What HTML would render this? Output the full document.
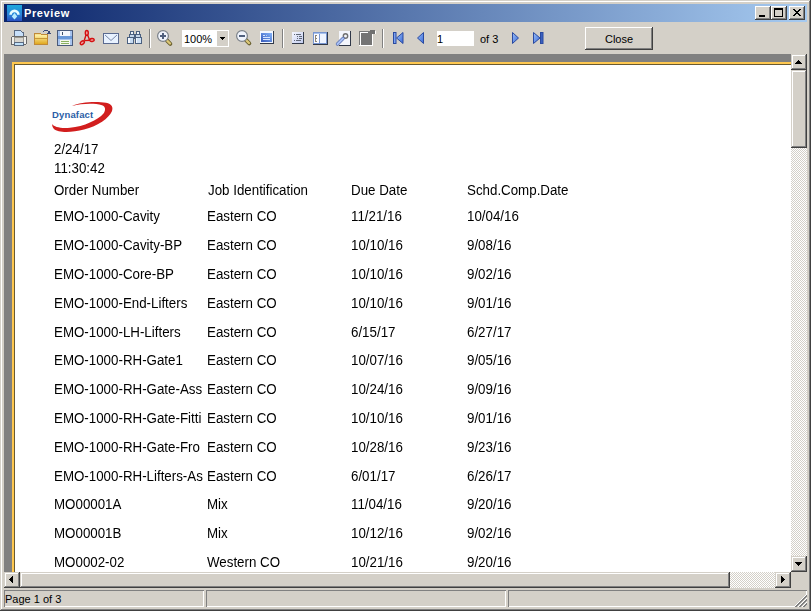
<!DOCTYPE html>
<html><head><meta charset="utf-8">
<style>
*{margin:0;padding:0;box-sizing:border-box}
html,body{width:811px;height:611px;overflow:hidden;background:#d4d0c8}
body{position:relative;font-family:"Liberation Sans",sans-serif;}
.a{position:absolute}
.ttl{font-weight:bold;color:#fff;font-size:11px;letter-spacing:0.6px}
.tb{font-size:11px;color:#000}
.pg{font-size:13.33px;color:#000;white-space:nowrap}
.r{position:absolute;white-space:nowrap;font-size:14px;line-height:16px;transform:scaleX(0.952);transform-origin:0 0}
</style></head><body>
<!-- window frame -->
<div class="a" style="left:1px;top:1px;width:808px;height:1px;background:#fff"></div>
<div class="a" style="left:1px;top:1px;width:1px;height:608px;background:#fff"></div>
<div class="a" style="left:809px;top:1px;width:1px;height:609px;background:#808080"></div>
<div class="a" style="left:1px;top:609px;width:809px;height:1px;background:#808080"></div>
<div class="a" style="left:810px;top:0;width:1px;height:611px;background:#404040"></div>
<div class="a" style="left:0;top:610px;width:811px;height:1px;background:#404040"></div>

<!-- title bar -->
<div class="a" style="left:4px;top:4px;width:803px;height:18px;background:linear-gradient(to right,#0a246a,#a6caf0)"></div>
<svg class="a" style="left:7px;top:5px" width="15" height="16">
<defs><linearGradient id="gic" x1="0" y1="0" x2="0" y2="1"><stop offset="0" stop-color="#1ea8dc"/><stop offset="0.6" stop-color="#2a84d8"/><stop offset="1" stop-color="#2a50c0"/></linearGradient>
<filter id="blr" x="-20%" y="-20%" width="140%" height="140%"><feGaussianBlur stdDeviation="0.6"/></filter></defs>
<rect width="15" height="16" fill="url(#gic)"/>
<g filter="url(#blr)">
<path d="M3.6 9.8 A3.9 3.9 0 0 1 11.4 9.8" stroke="#e8fcff" stroke-width="2.6" fill="none"/>
<path d="M7.5 8 L4.8 11.5 L7.5 14.5 L10.2 11.5 Z" fill="#b8ecff"/>
</g>
</svg>
<div class="a ttl" style="left:24px;top:6px;line-height:14px">Preview</div>
<div class="a" style="left:755px;top:6px;width:16px;height:14px;background:#d4d0c8;box-shadow:inset -1px -1px #404040,inset 1px 1px #fff,inset -2px -2px #808080"><div class="a" style="left:4px;top:9px;width:6px;height:2px;background:#000"></div></div>
<div class="a" style="left:771px;top:6px;width:16px;height:14px;background:#d4d0c8;box-shadow:inset -1px -1px #404040,inset 1px 1px #fff,inset -2px -2px #808080"><div class="a" style="left:3px;top:2px;width:9px;height:9px;border:1px solid #000;border-top-width:2px"></div></div>
<div class="a" style="left:789px;top:6px;width:16px;height:14px;background:#d4d0c8;box-shadow:inset -1px -1px #404040,inset 1px 1px #fff,inset -2px -2px #808080"><svg class="a" style="left:0;top:0" width="16" height="14" shape-rendering="crispEdges" fill="#000"><rect x="4" y="3" width="1" height="1"/><rect x="5" y="3" width="1" height="1"/><rect x="10" y="3" width="1" height="1"/><rect x="11" y="3" width="1" height="1"/><rect x="5" y="4" width="1" height="1"/><rect x="6" y="4" width="1" height="1"/><rect x="9" y="4" width="1" height="1"/><rect x="10" y="4" width="1" height="1"/><rect x="6" y="5" width="1" height="1"/><rect x="7" y="5" width="1" height="1"/><rect x="8" y="5" width="1" height="1"/><rect x="9" y="5" width="1" height="1"/><rect x="7" y="6" width="1" height="1"/><rect x="8" y="6" width="1" height="1"/><rect x="6" y="7" width="1" height="1"/><rect x="7" y="7" width="1" height="1"/><rect x="8" y="7" width="1" height="1"/><rect x="9" y="7" width="1" height="1"/><rect x="5" y="8" width="1" height="1"/><rect x="6" y="8" width="1" height="1"/><rect x="9" y="8" width="1" height="1"/><rect x="10" y="8" width="1" height="1"/><rect x="4" y="9" width="1" height="1"/><rect x="5" y="9" width="1" height="1"/><rect x="10" y="9" width="1" height="1"/><rect x="11" y="9" width="1" height="1"/></svg></div>

<!-- toolbar -->

<svg class="a" style="left:0;top:0" width="811" height="54" shape-rendering="crispEdges">
<defs>
<linearGradient id="gfold" x1="0" y1="0" x2="0" y2="1"><stop offset="0" stop-color="#fff2a8"/><stop offset="1" stop-color="#e0a820"/></linearGradient>
<linearGradient id="gblue" x1="0" y1="0" x2="1" y2="1"><stop offset="0" stop-color="#3d62c0"/><stop offset="1" stop-color="#7aa8f0"/></linearGradient>
<linearGradient id="gblue2" x1="0" y1="1" x2="1" y2="0"><stop offset="0" stop-color="#3558b8"/><stop offset="1" stop-color="#84b4fa"/></linearGradient>
<linearGradient id="gdoc" x1="0" y1="0" x2="1" y2="1"><stop offset="0" stop-color="#f4f6ff"/><stop offset="1" stop-color="#c4cef0"/></linearGradient>
<linearGradient id="gnav" x1="0" y1="0" x2="1" y2="1"><stop offset="0" stop-color="#9cc0f8"/><stop offset="1" stop-color="#3a6ad8"/></linearGradient>
</defs>
<!-- printer -->
<g>
<rect x="14" y="30" width="10" height="8" fill="#5a6a82"/>
<rect x="15" y="31" width="8" height="6" fill="#c8e0fa"/>
<rect x="21" y="30" width="3" height="2" fill="#d4d0c8"/><rect x="21" y="31" width="1" height="1" fill="#5a6a82"/><rect x="22" y="32" width="2" height="1" fill="#5a6a82"/>
<rect x="11" y="36" width="16" height="9" rx="2" fill="#6a6a6a"/>
<rect x="12" y="37" width="14" height="7" fill="#f0f0ee"/>
<rect x="14" y="37" width="10" height="6" fill="#9a9890"/>
<rect x="15" y="38" width="8" height="4" fill="#d8d6d0"/>
<rect x="14" y="42" width="10" height="4" fill="#5a6a82"/>
<rect x="15" y="43" width="8" height="2" fill="#bfe0f8"/>
</g>
<!-- folder -->
<g>
<rect x="34" y="33" width="14" height="12" fill="#c08a38"/>
<rect x="35" y="35" width="12" height="9" fill="url(#gfold)"/>
<rect x="35" y="34" width="6" height="1" fill="#f6e090"/>
<rect x="41" y="33" width="7" height="2" fill="#d4d0c8"/><rect x="41" y="34" width="7" height="1" fill="#c08a38"/>
<rect x="35" y="38" width="12" height="1" fill="#c89838"/>
<rect x="44" y="30" width="4" height="1" fill="#3a4a78"/><rect x="43" y="31" width="1" height="1" fill="#3a4a78"/>
<rect x="48" y="31" width="2" height="3" fill="#3a4a78"/><rect x="47" y="33" width="4" height="1" fill="#3a4a78"/>
</g>
<!-- save -->
<g>
<rect x="57" y="30" width="16" height="16" fill="#4a5a7a"/>
<rect x="58" y="31" width="14" height="14" fill="#a8c4ee"/>
<rect x="60" y="31" width="10" height="5" fill="#f4f6fc"/>
<rect x="62" y="32" width="1" height="3" fill="#40506a"/>
<rect x="58" y="36" width="14" height="3" fill="#6a98d8"/>
<rect x="60" y="40" width="10" height="5" fill="#f4f8ec"/>
<rect x="61" y="41" width="8" height="1" fill="#8ab060"/><rect x="61" y="43" width="8" height="1" fill="#8ab060"/>
</g>
<!-- pdf -->
<g fill="#f0a0a0" stroke="#d41010" stroke-width="1.4" shape-rendering="geometricPrecision">
<path d="M86 35 L84.2 40.6 M87.6 35 L89.6 40 M84.4 40.6 L90.2 40.2" fill="none"/>
<ellipse cx="86.8" cy="32.9" rx="1.5" ry="2.4"/>
<ellipse cx="82.3" cy="42.7" rx="2.3" ry="1.5" transform="rotate(-40 82.3 42.7)"/>
<ellipse cx="92" cy="40" rx="2.2" ry="1.5" transform="rotate(-10 92 40)"/>
</g>
<!-- email -->
<g>
<rect x="103" y="33" width="16" height="11" fill="#5a6a90"/>
<rect x="104" y="34" width="14" height="9" fill="#e8f2ff"/>
<path d="M105 35 L111 40.5 L117 35" stroke="#7a88a8" stroke-width="1" fill="none" shape-rendering="geometricPrecision"/>
</g>
<!-- binoculars -->
<g>
<rect x="130" y="31" width="4" height="4" fill="#4a6080"/><rect x="131" y="32" width="2" height="2" fill="#eef4fa"/>
<rect x="129" y="34" width="6" height="4" fill="#4a6080"/><rect x="130" y="35" width="4" height="2" fill="#c4d6ea"/>
<rect x="127" y="37" width="7" height="7" fill="#4a6080"/><rect x="128" y="38" width="5" height="5" fill="#c8dcf2"/><rect x="128" y="38" width="2" height="5" fill="#f4f8ff"/>
<rect x="136" y="31" width="4" height="4" fill="#4a6080"/><rect x="137" y="32" width="2" height="2" fill="#eef4fa"/>
<rect x="135" y="34" width="6" height="4" fill="#4a6080"/><rect x="136" y="35" width="4" height="2" fill="#c4d6ea"/>
<rect x="135" y="37" width="7" height="7" fill="#4a6080"/><rect x="136" y="38" width="5" height="5" fill="#d0e2f6"/><rect x="136" y="38" width="1" height="5" fill="#f4f8ff"/>
<rect x="134" y="37" width="1" height="2" fill="#4a6080"/>
</g>
<!-- separators -->
<rect x="149" y="29" width="1" height="19" fill="#808080"/><rect x="150" y="29" width="1" height="19" fill="#fff"/>
<rect x="282" y="29" width="1" height="19" fill="#808080"/><rect x="283" y="29" width="1" height="19" fill="#fff"/>
<rect x="382" y="29" width="1" height="19" fill="#808080"/><rect x="383" y="29" width="1" height="19" fill="#fff"/>
<!-- zoom in -->
<g shape-rendering="geometricPrecision">
<path d="M167 40.5 L170.3 43.8" stroke="#6a6030" stroke-width="4" stroke-linecap="round"/>
<path d="M167 40.5 L170 43.5" stroke="#dcc878" stroke-width="2.4" stroke-linecap="round"/>
<circle cx="163" cy="36" r="5.4" fill="#f0f4fc" stroke="#7a8088" stroke-width="1.2"/>
<rect x="160" y="35" width="6" height="2" fill="#50607e"/><rect x="162" y="33" width="2" height="6" fill="#50607e"/>
</g>
<!-- zoom out -->
<g shape-rendering="geometricPrecision">
<path d="M246 40 L249.3 43.3" stroke="#6a6030" stroke-width="4" stroke-linecap="round"/>
<path d="M246 40 L249 43" stroke="#dcc878" stroke-width="2.4" stroke-linecap="round"/>
<circle cx="242" cy="36" r="5.4" fill="#f0f4fc" stroke="#7a8088" stroke-width="1.2"/>
<rect x="239" y="35" width="6" height="2" fill="#50607e"/>
</g>
<!-- page width -->
<g>
<rect x="260" y="31" width="14" height="13" fill="#303848"/>
<rect x="260" y="31" width="13" height="12" fill="#f4f8ff"/>
<rect x="261" y="33" width="11" height="9" fill="url(#gblue2)"/>
<rect x="263" y="35" width="2" height="1" fill="#d8e6ff"/><rect x="266" y="35" width="1" height="1" fill="#b0c8f8"/>
<rect x="263" y="37" width="7" height="1" fill="#d8e6ff"/>
<rect x="263" y="39" width="7" height="1" fill="#d8e6ff"/>
</g>
<!-- outline icon -->
<g>
<rect x="292" y="32" width="12" height="12" fill="#303848"/>
<rect x="292" y="32" width="11" height="11" fill="url(#gdoc)"/>
<rect x="294" y="34" width="1" height="1" fill="#606878"/><rect x="296" y="34" width="5" height="1" fill="#606878"/>
<rect x="297" y="36" width="1" height="1" fill="#606878"/><rect x="299" y="36" width="3" height="1" fill="#606878"/>
<rect x="297" y="38" width="1" height="1" fill="#606878"/><rect x="299" y="38" width="3" height="1" fill="#606878"/>
<rect x="294" y="40" width="1" height="1" fill="#606878"/><rect x="296" y="40" width="5" height="1" fill="#606878"/>
</g>
<!-- two pane -->
<g>
<rect x="313" y="32" width="15" height="13" fill="#303848"/>
<rect x="313" y="32" width="14" height="12" fill="#7896d0"/>
<rect x="314" y="33" width="12" height="1" fill="#a8c2ee"/>
<rect x="314" y="34" width="5" height="9" fill="#fbfcff"/>
<rect x="320" y="34" width="6" height="9" fill="#eef4ff"/>
<rect x="315" y="35" width="1" height="7" fill="#8a8478"/><rect x="316" y="35" width="1" height="1" fill="#8a8478"/><rect x="316" y="38" width="1" height="1" fill="#8a8478"/><rect x="316" y="41" width="1" height="1" fill="#8a8478"/>
</g>
<!-- wrench -->
<g>
<rect x="339" y="31" width="12" height="15" fill="#303848"/>
<rect x="339" y="31" width="11" height="14" fill="#f4f6fc"/>
<circle cx="345.5" cy="36" r="2.2" fill="none" stroke="#707070" stroke-width="1.4" shape-rendering="geometricPrecision"/>
<path d="M343 38.5 L337.5 44" stroke="#5a70b0" stroke-width="3.4" stroke-linecap="round" shape-rendering="geometricPrecision"/>
<path d="M343 38.5 L337.5 44" stroke="#a8c0f4" stroke-width="2" stroke-linecap="round" shape-rendering="geometricPrecision"/>
</g>
<!-- gray page -->
<g>
<rect x="359" y="31" width="12" height="15" fill="#fff"/>
<rect x="359" y="31" width="11" height="14" fill="#7a7a7a"/>
<rect x="360" y="32" width="8" height="1" fill="#fff"/><rect x="360" y="32" width="1" height="13" fill="#fff"/>
<rect x="361" y="33" width="11" height="12" fill="#747474"/>
<rect x="372" y="34" width="1" height="12" fill="#fff"/><rect x="361" y="45" width="12" height="1" fill="#fff"/>
<rect x="370" y="30" width="5" height="4" fill="#707070"/><rect x="375" y="31" width="1" height="3" fill="#fff"/>
</g>
<!-- nav -->
<g shape-rendering="geometricPrecision">
<rect x="393.5" y="32.5" width="2.5" height="11" fill="#7aa0f0" stroke="#2a4aa0" stroke-width="1"/>
<path d="M403 32.5 L396.5 38 L403 43.5 Z" fill="url(#gnav)" stroke="#2a4aa0" stroke-width="1"/>
<path d="M423.5 32.5 L417.5 38 L423.5 43.5 Z" fill="url(#gnav)" stroke="#2a4aa0" stroke-width="1"/>
<path d="M512.5 32.5 L518.5 38 L512.5 43.5 Z" fill="url(#gnav)" stroke="#2a4aa0" stroke-width="1"/>
<path d="M533.5 32.5 L540 38 L533.5 43.5 Z" fill="url(#gnav)" stroke="#2a4aa0" stroke-width="1"/>
<rect x="540.5" y="32.5" width="2.5" height="11" fill="#3a60c0" stroke="#2a4aa0" stroke-width="1"/>
</g>
<!-- combo -->
<rect x="182" y="30" width="47" height="17" fill="#fff"/>
<rect x="217" y="31" width="11" height="15" fill="#d4d0c8"/>
<path d="M220 37h5v1h-1v1h-1v1h-1v-1h-1v-1h-1z" fill="#000"/>
<!-- page input -->
<rect x="437" y="31" width="37" height="15" fill="#fff"/>
</svg>
<div class="a tb" style="left:184px;top:33px;line-height:12px;font-size:11px">100%</div>
<div class="a tb" style="left:437px;top:33px;line-height:12px;font-size:11px">1</div>
<div class="a tb" style="left:480px;top:33px;line-height:12px;font-size:11px">of 3</div>
<div class="a" style="left:585px;top:27px;width:68px;height:23px;background:#d4d0c8;box-shadow:inset -1px -1px #404040,inset 1px 1px #fff,inset -2px -2px #808080"></div>
<div class="a tb" style="left:585px;top:33px;width:68px;text-align:center;line-height:12px;font-size:11px">Close</div>

<!-- client gray area -->
<div class="a" style="left:4px;top:54px;width:787px;height:518px;background:#808080;overflow:hidden">
  <div class="a" style="left:8px;top:8px;width:800px;height:600px;background:#ffc850"></div>
  <div class="a" style="left:10px;top:10px;width:800px;height:600px;background:#6a5a30"></div>
  <div class="a" style="left:11px;top:11px;width:800px;height:600px;background:#fff"></div>
</div>
<div id="page" class="a" style="left:0;top:0;width:791px;height:572px;overflow:hidden">
<svg class="a" style="left:48px;top:98px" width="70" height="38">
<path d="M24 8 C32 4 48 3 58 4.8 C64 6 65.5 9.5 63.8 13.5 C61 20 50 28 36 31.5 C24 34.8 10 35 6 31 C4.5 29.5 4 27.5 4.3 26 C6 29 12 30.5 22 29.8 C36 28.5 50 22 55.5 15.5 C58 12 57.5 8.5 54 7.3 C46 5 34 5.6 24 8 Z" fill="#d21e1e"/>
</svg>
<div class="a" style="left:52px;top:109px;font-size:9.5px;font-weight:bold;color:#2a5ea6;line-height:12px;letter-spacing:0.15px">Dynafact</div>
<div class="r" style="left:54px;top:141px">2/24/17</div>
<div class="r" style="left:54px;top:160px">11:30:42</div>
<div class="r" style="left:54px;top:182px">Order Number</div>
<div class="r" style="left:208px;top:182px">Job Identification</div>
<div class="r" style="left:351px;top:182px">Due Date</div>
<div class="r" style="left:467px;top:182px">Schd.Comp.Date</div>
<div class="r" style="left:54px;top:208px">EMO-1000-Cavity</div>
<div class="r" style="left:207px;top:208px">Eastern CO</div>
<div class="r" style="left:351px;top:208px">11/21/16</div>
<div class="r" style="left:467px;top:208px">10/04/16</div>
<div class="r" style="left:54px;top:237px">EMO-1000-Cavity-BP</div>
<div class="r" style="left:207px;top:237px">Eastern CO</div>
<div class="r" style="left:351px;top:237px">10/10/16</div>
<div class="r" style="left:467px;top:237px">9/08/16</div>
<div class="r" style="left:54px;top:266px">EMO-1000-Core-BP</div>
<div class="r" style="left:207px;top:266px">Eastern CO</div>
<div class="r" style="left:351px;top:266px">10/10/16</div>
<div class="r" style="left:467px;top:266px">9/02/16</div>
<div class="r" style="left:54px;top:295px">EMO-1000-End-Lifters</div>
<div class="r" style="left:207px;top:295px">Eastern CO</div>
<div class="r" style="left:351px;top:295px">10/10/16</div>
<div class="r" style="left:467px;top:295px">9/01/16</div>
<div class="r" style="left:54px;top:324px">EMO-1000-LH-Lifters</div>
<div class="r" style="left:207px;top:324px">Eastern CO</div>
<div class="r" style="left:351px;top:324px">6/15/17</div>
<div class="r" style="left:467px;top:324px">6/27/17</div>
<div class="r" style="left:54px;top:352px">EMO-1000-RH-Gate1</div>
<div class="r" style="left:207px;top:352px">Eastern CO</div>
<div class="r" style="left:351px;top:352px">10/07/16</div>
<div class="r" style="left:467px;top:352px">9/05/16</div>
<div class="r" style="left:54px;top:381px">EMO-1000-RH-Gate-Ass</div>
<div class="r" style="left:207px;top:381px">Eastern CO</div>
<div class="r" style="left:351px;top:381px">10/24/16</div>
<div class="r" style="left:467px;top:381px">9/09/16</div>
<div class="r" style="left:54px;top:410px">EMO-1000-RH-Gate-Fitti</div>
<div class="r" style="left:207px;top:410px">Eastern CO</div>
<div class="r" style="left:351px;top:410px">10/10/16</div>
<div class="r" style="left:467px;top:410px">9/01/16</div>
<div class="r" style="left:54px;top:439px">EMO-1000-RH-Gate-Fro</div>
<div class="r" style="left:207px;top:439px">Eastern CO</div>
<div class="r" style="left:351px;top:439px">10/28/16</div>
<div class="r" style="left:467px;top:439px">9/23/16</div>
<div class="r" style="left:54px;top:468px">EMO-1000-RH-Lifters-As</div>
<div class="r" style="left:207px;top:468px">Eastern CO</div>
<div class="r" style="left:351px;top:468px">6/01/17</div>
<div class="r" style="left:467px;top:468px">6/26/17</div>
<div class="r" style="left:54px;top:496px">MO00001A</div>
<div class="r" style="left:207px;top:496px">Mix</div>
<div class="r" style="left:351px;top:496px">11/04/16</div>
<div class="r" style="left:467px;top:496px">9/20/16</div>
<div class="r" style="left:54px;top:525px">MO00001B</div>
<div class="r" style="left:207px;top:525px">Mix</div>
<div class="r" style="left:351px;top:525px">10/12/16</div>
<div class="r" style="left:467px;top:525px">9/02/16</div>
<div class="r" style="left:54px;top:554px">MO0002-02</div>
<div class="r" style="left:207px;top:554px">Western CO</div>
<div class="r" style="left:351px;top:554px">10/21/16</div>
<div class="r" style="left:467px;top:554px">9/20/16</div>
</div>

<!-- scrollbars -->
<div class="a" style="left:791px;top:54px;width:16px;height:518px;background:repeating-conic-gradient(#d4d0c8 0 25%,#fff 0 50%) 0 0/2px 2px"></div>
<div class="a" style="left:791px;top:54px;width:16px;height:16px;background:#d4d0c8;box-shadow:inset -1px -1px #404040,inset 1px 1px #d4d0c8,inset -2px -2px #808080,inset 2px 2px #fff"><svg class="a" style="left:0;top:0" width="16" height="16"><path d="M7 6h1v1h1v1h1v1h1v1h-7v-1h1v-1h1v-1h1z" fill="#000"/></svg></div>
<div class="a" style="left:791px;top:70px;width:16px;height:78px;background:#d4d0c8;box-shadow:inset -1px -1px #404040,inset 1px 1px #d4d0c8,inset -2px -2px #808080,inset 2px 2px #fff"></div>
<div class="a" style="left:791px;top:556px;width:16px;height:16px;background:#d4d0c8;box-shadow:inset -1px -1px #404040,inset 1px 1px #d4d0c8,inset -2px -2px #808080,inset 2px 2px #fff"><svg class="a" style="left:0;top:0" width="16" height="16"><path d="M4 6h7v1h-1v1h-1v1h-1v1h-1v-1h-1v-1h-1v-1h-1z" fill="#000"/></svg></div>
<div class="a" style="left:4px;top:572px;width:787px;height:16px;background:repeating-conic-gradient(#fff 0 25%,#d4d0c8 0 50%) 0 0/2px 2px"></div>
<div class="a" style="left:4px;top:572px;width:16px;height:16px;background:#d4d0c8;box-shadow:inset -1px -1px #404040,inset 1px 1px #d4d0c8,inset -2px -2px #808080,inset 2px 2px #fff"><svg class="a" style="left:0;top:0" width="16" height="16"><path d="M8 4h1v7h-1v-1h-1v-1h-1v-1h-1v-1h1v-1h1v-1h1z" fill="#000"/></svg></div>
<div class="a" style="left:20px;top:572px;width:710px;height:16px;background:#d4d0c8;box-shadow:inset -1px -1px #404040,inset 1px 1px #d4d0c8,inset -2px -2px #808080,inset 2px 2px #fff"></div>
<div class="a" style="left:775px;top:572px;width:16px;height:16px;background:#d4d0c8;box-shadow:inset -1px -1px #404040,inset 1px 1px #d4d0c8,inset -2px -2px #808080,inset 2px 2px #fff"><svg class="a" style="left:0;top:0" width="16" height="16"><path d="M6 4h1v1h1v1h1v1h1v1h-1v1h-1v1h-1v1h-1z" fill="#000"/></svg></div>
<div class="a" style="left:791px;top:572px;width:16px;height:16px;background:#d4d0c8"></div>

<!-- status bar -->
<div class="a" style="left:4px;top:590px;width:200px;height:17px;box-shadow:inset 1px 1px #808080,inset -1px -1px #fff"></div>
<div class="a tb" style="left:5px;top:593px;line-height:13px">Page 1 of 3</div>
<div class="a" style="left:206px;top:590px;width:300px;height:17px;box-shadow:inset 1px 1px #808080,inset -1px -1px #fff"></div>
<div class="a" style="left:508px;top:590px;width:299px;height:17px;box-shadow:inset 1px 1px #808080,inset -1px -1px #fff"></div>
<svg class="a" style="left:791px;top:590px" width="16" height="17" shape-rendering="crispEdges"><rect x="15" y="4" width="1" height="1" fill="#fff"/><rect x="14" y="5" width="1" height="1" fill="#fff"/><rect x="15" y="5" width="1" height="1" fill="#808080"/><rect x="13" y="6" width="1" height="1" fill="#fff"/><rect x="14" y="6" width="1" height="1" fill="#808080"/><rect x="15" y="6" width="1" height="1" fill="#808080"/><rect x="12" y="7" width="1" height="1" fill="#fff"/><rect x="13" y="7" width="1" height="1" fill="#808080"/><rect x="14" y="7" width="1" height="1" fill="#808080"/><rect x="15" y="7" width="1" height="1" fill="#d4d0c8"/><rect x="11" y="8" width="1" height="1" fill="#fff"/><rect x="12" y="8" width="1" height="1" fill="#808080"/><rect x="13" y="8" width="1" height="1" fill="#808080"/><rect x="14" y="8" width="1" height="1" fill="#d4d0c8"/><rect x="15" y="8" width="1" height="1" fill="#fff"/><rect x="10" y="9" width="1" height="1" fill="#fff"/><rect x="11" y="9" width="1" height="1" fill="#808080"/><rect x="12" y="9" width="1" height="1" fill="#808080"/><rect x="13" y="9" width="1" height="1" fill="#d4d0c8"/><rect x="14" y="9" width="1" height="1" fill="#fff"/><rect x="15" y="9" width="1" height="1" fill="#808080"/><rect x="9" y="10" width="1" height="1" fill="#fff"/><rect x="10" y="10" width="1" height="1" fill="#808080"/><rect x="11" y="10" width="1" height="1" fill="#808080"/><rect x="12" y="10" width="1" height="1" fill="#d4d0c8"/><rect x="13" y="10" width="1" height="1" fill="#fff"/><rect x="14" y="10" width="1" height="1" fill="#808080"/><rect x="15" y="10" width="1" height="1" fill="#808080"/><rect x="8" y="11" width="1" height="1" fill="#fff"/><rect x="9" y="11" width="1" height="1" fill="#808080"/><rect x="10" y="11" width="1" height="1" fill="#808080"/><rect x="11" y="11" width="1" height="1" fill="#d4d0c8"/><rect x="12" y="11" width="1" height="1" fill="#fff"/><rect x="13" y="11" width="1" height="1" fill="#808080"/><rect x="14" y="11" width="1" height="1" fill="#808080"/><rect x="15" y="11" width="1" height="1" fill="#d4d0c8"/><rect x="7" y="12" width="1" height="1" fill="#fff"/><rect x="8" y="12" width="1" height="1" fill="#808080"/><rect x="9" y="12" width="1" height="1" fill="#808080"/><rect x="10" y="12" width="1" height="1" fill="#d4d0c8"/><rect x="11" y="12" width="1" height="1" fill="#fff"/><rect x="12" y="12" width="1" height="1" fill="#808080"/><rect x="13" y="12" width="1" height="1" fill="#808080"/><rect x="14" y="12" width="1" height="1" fill="#d4d0c8"/><rect x="15" y="12" width="1" height="1" fill="#fff"/><rect x="6" y="13" width="1" height="1" fill="#fff"/><rect x="7" y="13" width="1" height="1" fill="#808080"/><rect x="8" y="13" width="1" height="1" fill="#808080"/><rect x="9" y="13" width="1" height="1" fill="#d4d0c8"/><rect x="10" y="13" width="1" height="1" fill="#fff"/><rect x="11" y="13" width="1" height="1" fill="#808080"/><rect x="12" y="13" width="1" height="1" fill="#808080"/><rect x="13" y="13" width="1" height="1" fill="#d4d0c8"/><rect x="14" y="13" width="1" height="1" fill="#fff"/><rect x="15" y="13" width="1" height="1" fill="#808080"/><rect x="5" y="14" width="1" height="1" fill="#fff"/><rect x="6" y="14" width="1" height="1" fill="#808080"/><rect x="7" y="14" width="1" height="1" fill="#808080"/><rect x="8" y="14" width="1" height="1" fill="#d4d0c8"/><rect x="9" y="14" width="1" height="1" fill="#fff"/><rect x="10" y="14" width="1" height="1" fill="#808080"/><rect x="11" y="14" width="1" height="1" fill="#808080"/><rect x="12" y="14" width="1" height="1" fill="#d4d0c8"/><rect x="13" y="14" width="1" height="1" fill="#fff"/><rect x="14" y="14" width="1" height="1" fill="#808080"/><rect x="15" y="14" width="1" height="1" fill="#808080"/><rect x="4" y="15" width="1" height="1" fill="#fff"/><rect x="5" y="15" width="1" height="1" fill="#808080"/><rect x="6" y="15" width="1" height="1" fill="#808080"/><rect x="7" y="15" width="1" height="1" fill="#d4d0c8"/><rect x="8" y="15" width="1" height="1" fill="#fff"/><rect x="9" y="15" width="1" height="1" fill="#808080"/><rect x="10" y="15" width="1" height="1" fill="#808080"/><rect x="11" y="15" width="1" height="1" fill="#d4d0c8"/><rect x="12" y="15" width="1" height="1" fill="#fff"/><rect x="13" y="15" width="1" height="1" fill="#808080"/><rect x="14" y="15" width="1" height="1" fill="#808080"/><rect x="15" y="15" width="1" height="1" fill="#d4d0c8"/><rect x="3" y="16" width="1" height="1" fill="#fff"/><rect x="4" y="16" width="1" height="1" fill="#808080"/><rect x="5" y="16" width="1" height="1" fill="#808080"/><rect x="6" y="16" width="1" height="1" fill="#d4d0c8"/><rect x="7" y="16" width="1" height="1" fill="#fff"/><rect x="8" y="16" width="1" height="1" fill="#808080"/><rect x="9" y="16" width="1" height="1" fill="#808080"/><rect x="10" y="16" width="1" height="1" fill="#d4d0c8"/><rect x="11" y="16" width="1" height="1" fill="#fff"/><rect x="12" y="16" width="1" height="1" fill="#808080"/><rect x="13" y="16" width="1" height="1" fill="#808080"/><rect x="14" y="16" width="1" height="1" fill="#d4d0c8"/><rect x="15" y="16" width="1" height="1" fill="#d4d0c8"/></svg>
</body></html>
